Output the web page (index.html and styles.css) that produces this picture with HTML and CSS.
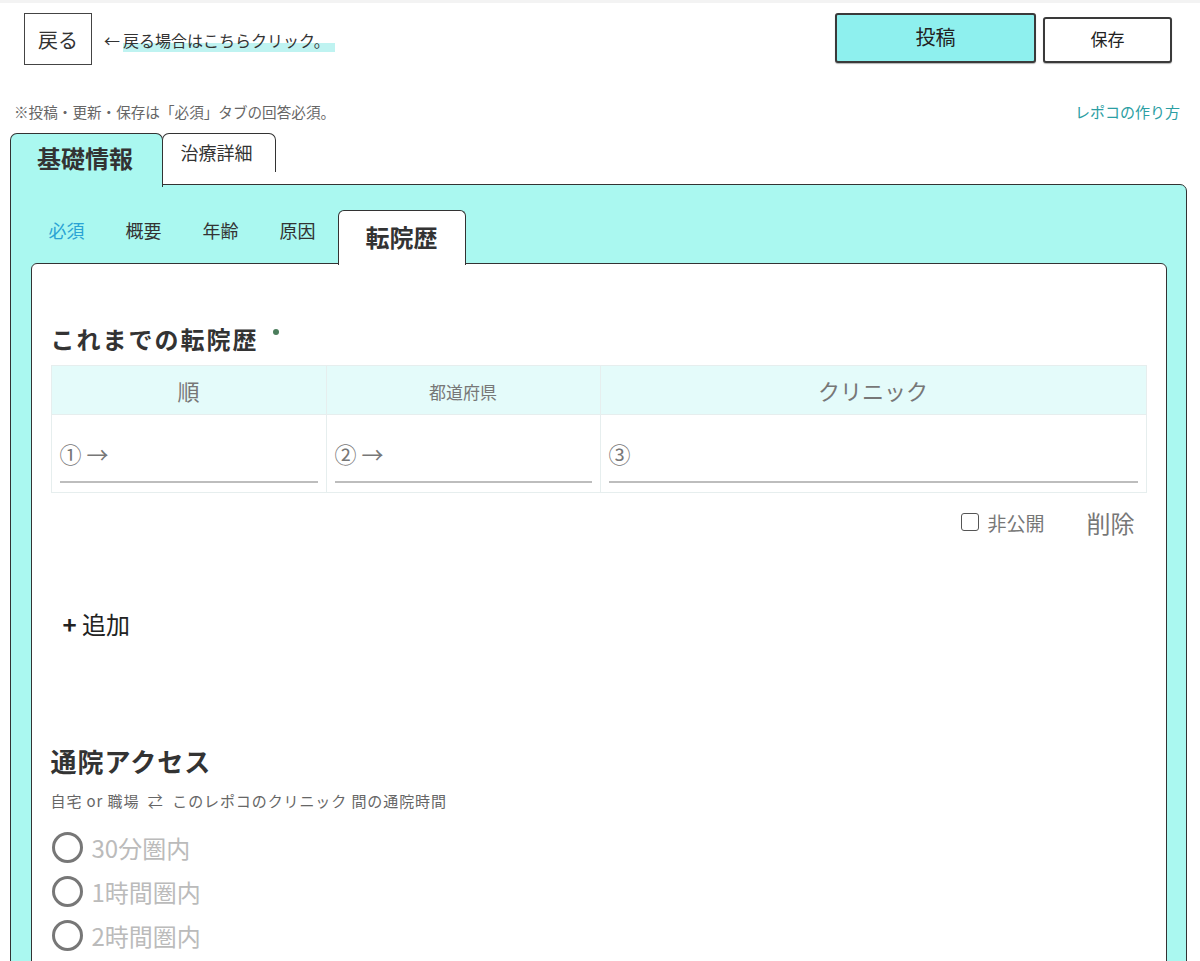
FILE: index.html
```html
<!DOCTYPE html>
<html lang="ja">
<head>
<meta charset="utf-8">
<title>レポコ 投稿</title>
<link rel="stylesheet" href="styles.css">
</head>
<body>
<div class="topline"></div>
<header class="topbar">
  <div class="back-wrap">
    <button class="btn-back">戻る</button>
    <span class="hint"><span class="arrow">←</span><span class="hl">戻る場合はこちらクリック。</span></span>
  </div>
  <div class="actions">
    <button class="btn-post">投稿</button>
    <button class="btn-save">保存</button>
  </div>
</header>
<div class="notes">
  <span class="note">※投稿・更新・保存は「必須」タブの回答必須。</span>
  <a class="howto">レポコの作り方</a>
</div>
<main class="outer">
  <div class="outer-tabs">
    <div class="otab otab-active">基礎情報</div>
    <div class="otab otab-idle">治療詳細</div>
  </div>
  <section class="outer-panel">
    <div class="inner-tabs">
      <span class="itab itab-req">必須</span>
      <span class="itab">概要</span>
      <span class="itab">年齢</span>
      <span class="itab">原因</span>
      <span class="itab itab-active">転院歴</span>
    </div>
    <div class="inner-panel">
      <h2 class="q-title">これまでの転院歴<span class="req-dot"></span></h2>
      <div class="table">
        <div class="th th-order">順</div>
        <div class="th th-pref">都道府県</div>
        <div class="th th-clinic">クリニック</div>
        <div class="td"><div class="field">① →</div></div>
        <div class="td"><div class="field">② →</div></div>
        <div class="td"><div class="field">③</div></div>
      </div>
      <div class="row-actions">
        <label class="private"><span class="cbox"></span>非公開</label>
        <span class="delete">削除</span>
      </div>
      <div class="add"><b>+</b> 追加</div>
      <h2 class="q-title q-access">通院アクセス</h2>
      <p class="q-sub">自宅 or 職場 &nbsp;⇄&nbsp; このレポコのクリニック 間の通院時間</p>
      <ul class="radios">
        <li><span class="radio"></span>30分圏内</li>
        <li><span class="radio"></span>1時間圏内</li>
        <li><span class="radio"></span>2時間圏内</li>
      </ul>
    </div>
  </section>
</main>
</body>
</html>
```
FILE: styles.css
```css
* { box-sizing: border-box; }
html, body { margin: 0; padding: 0; background: #fff; }
body {
  font-family: "Noto Sans CJK JP", "Noto Sans", sans-serif;
  color: #333;
  overflow: hidden;
  height: 961px;
}
.topline { height: 3px; background: #f3f3f3; }

.topbar {
  display: flex;
  justify-content: space-between;
  align-items: flex-start;
  padding: 10px 28px 0 24px;
}
.back-wrap { display: flex; align-items: center; }
.btn-back {
  width: 68px;
  height: 52px;
  background: #fff;
  border: 1.5px solid #444;
  font-family: inherit;
  font-size: 20px;
  color: #333;
  padding: 0;
}
.hint {
  margin-left: 12px;
  font-size: 16px;
  color: #333;
  margin-top: 2px;
}
.arrow { margin-right: 3px; }
.hl {
  background: linear-gradient(transparent 62%, #bff3f1 62%);
  padding-right: 5px;
}
.actions { display: flex; align-items: flex-end; gap: 7px; }
.btn-post {
  width: 201px;
  height: 50px;
  background: #8ef0ee;
  border: 2px solid #3a3a3a;
  border-radius: 3px;
  font-family: inherit;
  font-size: 20px;
  color: #222;
  padding: 0 0 3px;
  box-shadow: 0 1px 1px rgba(0,0,0,.3);
}
.btn-save {
  width: 129px;
  height: 46px;
  background: #fff;
  border: 2px solid #3a3a3a;
  border-radius: 3px;
  font-family: inherit;
  font-size: 17px;
  color: #222;
  padding: 0 0 3px;
  box-shadow: 0 1px 1px rgba(0,0,0,.3);
}

.notes {
  display: flex;
  justify-content: space-between;
  align-items: center;
  padding: 0 20px 0 14px;
  margin-top: 35px;
  height: 22px;
}
.note { font-size: 14.6px; color: #666; }
.howto { font-size: 15px; color: #2b9ea3; }

.outer { margin: 11px 13px 0 10px; }
.outer-tabs { display: flex; align-items: flex-start; height: 51px; }
.otab {
  border: 1.5px solid #333;
  border-bottom: none;
  border-radius: 7px 7px 0 0;
}
.otab-active {
  width: 153px;
  height: 54px;
  background: #aaf8f0;
  font-size: 24px;
  font-weight: 700;
  padding: 6px 0 0 26px;
  position: relative;
  z-index: 2;
}
.otab-idle {
  width: 114px;
  height: 39px;
  background: #fff;
  margin-left: -1.5px;
  font-size: 18px;
  padding: 5px 0 0 18px;
}
.outer-panel {
  background: #aaf8f0;
  border: 1.5px solid #333;
  border-radius: 0 7px 0 0;
  padding: 25px 19.5px 0 19.5px;
  height: 780px;
}
.inner-tabs {
  display: flex;
  align-items: flex-end;
  height: 53px;
  padding-left: 18px;
}
.itab {
  font-size: 18px;
  color: #333;
  margin-right: 41px;
  padding-bottom: 20px;
}
.itab-req { color: #2aa3d4; }
.itab-active {
  margin-left: -19px;
  margin-right: 0;
  width: 128px;
  height: 55px;
  background: #fff;
  border: 1.5px solid #333;
  border-bottom: none;
  border-radius: 6px 6px 0 0;
  font-size: 24px;
  font-weight: 700;
  text-align: center;
  padding: 8px 0 0;
  margin-bottom: -1.5px;
  position: relative;
  z-index: 2;
}
.inner-panel {
  background: #fff;
  border: 1.5px solid #333;
  border-radius: 6px 6px 0 0;
  padding: 59px 19px 0 19px;
  height: 720px;
}
.q-title {
  margin: 0;
  font-size: 24px;
  font-weight: 700;
  letter-spacing: 2px;
  line-height: 32px;
  color: #333;
}
.req-dot {
  display: inline-block;
  width: 6px;
  height: 6px;
  border-radius: 50%;
  background: #4b7d5c;
  vertical-align: top;
  margin: 6px 0 0 14px;
}
.table {
  display: grid;
  grid-template-columns: 275px 274px 1fr;
  margin-top: 10px;
  border-top: 1px solid #e6eeee;
  border-left: 1px solid #e6eeee;
}
.th, .td {
  border-right: 1px solid #e6eeee;
  border-bottom: 1px solid #e6eeee;
}
.th {
  background: #e4fbfa;
  height: 49px;
  display: flex;
  align-items: center;
  justify-content: center;
  color: #777;
  font-size: 22px;
}
.th-pref { font-size: 17px; padding-top: 3px; }
.td { height: 78px; padding: 19px 8px 0 8px; }
.field {
  height: 49px;
  border-bottom: 2px solid #bdbdbd;
  font-size: 22px;
  color: #777;
  line-height: 38px;
}
.row-actions {
  display: flex;
  justify-content: flex-end;
  align-items: center;
  height: 32px;
  margin-top: 13px;
  padding-right: 12px;
}
.private {
  display: flex;
  align-items: center;
  font-size: 19px;
  color: #777;
}
.cbox {
  width: 18px;
  height: 18px;
  border: 1.5px solid #555;
  border-radius: 3px;
  margin-right: 8px;
}
.delete { font-size: 24px; color: #777; margin-left: 42px; }
.add {
  margin: 70px 0 0 12px;
  font-size: 24px;
  color: #222;
  line-height: 32px;
}
.add b { font-weight: 700; }
.q-access { margin-top: 104px; font-size: 26px; letter-spacing: 1px; line-height: 34px; }
.q-sub {
  margin: 12px 0 0;
  font-size: 15px;
  letter-spacing: 0.9px;
  color: #666;
  line-height: 22px;
}
.radios { list-style: none; margin: 13px 0 0; padding: 0; }
.radios li {
  display: flex;
  align-items: center;
  height: 44px;
  font-size: 24px;
  color: #bbb;
}
.radio {
  width: 31px;
  height: 31px;
  border: 3px solid #777;
  border-radius: 50%;
  margin: 0 9px 0 1px;
}
```
